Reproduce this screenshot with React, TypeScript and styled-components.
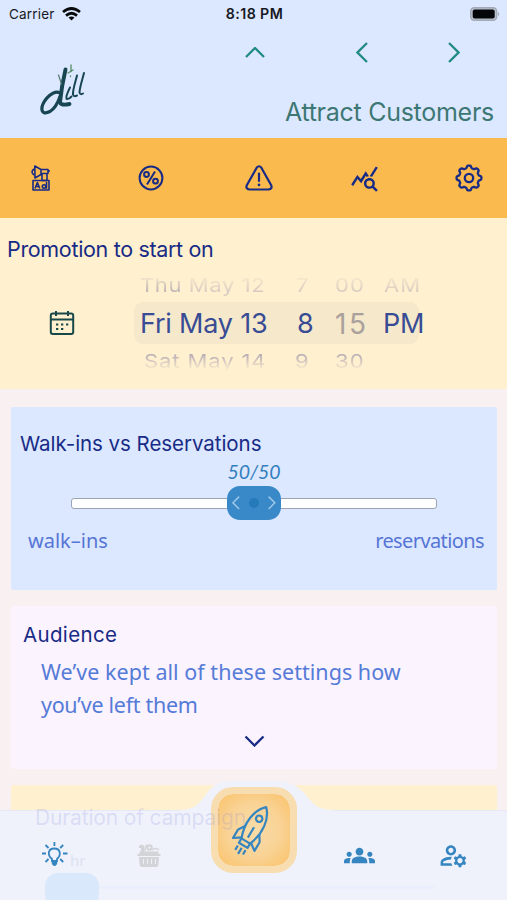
import React from 'react';
import styled, { createGlobalStyle } from 'styled-components';
import { MdGroups, MdOutlineManageAccounts, MdQueryStats } from 'react-icons/md';

const GlobalStyle = createGlobalStyle`
  * { box-sizing: border-box; }
  html, body { margin: 0; height: 900px; overflow: hidden; background: #f9f1f1; }
`;

const navy = '#172b86';
const blue = '#3585c0';

const Screen = styled.main`
  position: relative;
  width: 507px;
  height: 900px;
  overflow: hidden;
  background: #f9f1f1;
  font-family: Inter, sans-serif;
`;

const Header = styled.header`
  height: 138px;
  background: #dce8ff;
`;

const StatusBar = styled.div`
  display: grid;
  grid-template-columns: 1fr auto 1fr;
  align-items: center;
  height: 28px;
  padding: 0 7px 0 9px;
  font-size: 13.5px;
  line-height: 28px;
  color: #17191f;
`;

const Carrier = styled.div`
  display: flex;
  align-items: center;
  gap: 7px;
  letter-spacing: 0.2px;
`;

const Clock = styled.div`
  font-size: 14.2px;
  font-weight: 600;
  letter-spacing: 0.4px;
  white-space: nowrap;
`;

const BatterySlot = styled.div`
  display: flex;
  justify-content: flex-end;
`;

const HeaderBody = styled.div`
  display: grid;
  grid-template-columns: 208px 1fr;
  height: 110px;
`;

const LogoSlot = styled.div`
  padding: 33px 0 0 36px;
`;

const HeaderRight = styled.div`
  display: flex;
  flex-direction: column;
`;

const Arrows = styled.div`
  display: grid;
  grid-template-columns: 94px 120px 64px;
  justify-items: center;
  height: 48px;
  padding-top: 12px;
`;

const Title = styled.h1`
  margin: 19px 13px 0 0;
  font-size: 25px;
  line-height: 34px;
  font-weight: 400;
  letter-spacing: -0.27px;
  text-align: right;
  white-space: nowrap;
  color: #3d7774;
`;

const Toolbar = styled.nav`
  display: grid;
  grid-template-columns: 82px 138px 78px 132px 77px;
  place-items: center;
  height: 80px;
  background: #fbba4e;
  color: ${navy};
`;

const ToolButton = styled.button`
  display: grid;
  place-items: center;
  width: 30px;
  height: 30px;
  padding: 0;
  border: 0;
  background: none;
  color: inherit;
`;

const Promotion = styled.section`
  height: 171px;
  padding-top: 16px;
  background: #fff0cf;
`;

const PromotionTitle = styled.h2`
  margin: 0 0 0 7px;
  font-size: 21.5px;
  line-height: 30px;
  font-weight: 400;
  letter-spacing: -0.33px;
  color: ${navy};
`;

const PickerRow = styled.div`
  display: grid;
  grid-template-columns: 134px 292px;
  height: 118px;
`;

const CalendarSlot = styled.div`
  display: flex;
  padding: 46px 0 0 49px;
`;

const Wheel = styled.div`
  padding-top: 6px;
`;

const WheelRow = styled.div<{ $kind: 'before' | 'now' | 'after' }>`
  display: grid;
  grid-template-columns: 133px 58px 52px 45px;
  align-items: center;
  height: ${({ $kind }) => ($kind === 'now' ? 42 : 28)}px;
  margin-bottom: ${({ $kind }) => ($kind === 'after' ? 0 : $kind === 'now' ? 2 : 4)}px;
  padding-top: ${({ $kind }) => ($kind === 'now' ? 2 : 0)}px;
  width: ${({ $kind }) => ($kind === 'now' ? 285 : 292)}px;
  border-radius: 9px;
  overflow: ${({ $kind }) => ($kind === 'now' ? 'visible' : 'hidden')};
  background: ${({ $kind }) => ($kind === 'now' ? '#f5e8cb' : 'none')};
  color: ${({ $kind }) => ($kind === 'now' ? '#384b94' : $kind === 'before' ? '#d9cdc2' : '#b7adb5')};
  -webkit-mask-image: ${({ $kind }) =>
    $kind === 'now'
      ? 'none'
      : $kind === 'before'
        ? 'linear-gradient(transparent 12%, #000 75%)'
        : 'linear-gradient(#000 30%, transparent 88%)'};
`;

const WheelCell = styled.span<{ $size?: number; $pad?: number; $gray?: boolean; $spacing?: number; $flat?: boolean }>`
  display: block;
  padding-left: ${({ $pad = 0 }) => $pad}px;
  font-size: ${({ $size = 27 }) => $size}px;
  line-height: 30px;
  white-space: nowrap;
  letter-spacing: ${({ $spacing = 0 }) => $spacing}px;
  transform: ${({ $flat }) => ($flat ? 'scaleY(0.86)' : 'none')};
  ${({ $gray }) => $gray && 'color: #aaa09c;'}
`;

const WheelStrong = styled.span`
  color: #c1b7b5;
`;

const Cards = styled.div`
  display: flex;
  flex-direction: column;
  gap: 16px;
  padding: 18px 10px 0 11px;
`;

const SliderCard = styled.section`
  height: 183px;
  padding-top: 22px;
  border-radius: 2px;
  background: #dce8ff;
`;

const CardTitle = styled.h2<{ $left: number; $spacing?: number }>`
  margin: 0 0 0 ${({ $left }) => $left}px;
  font-size: 20.5px;
  line-height: 30px;
  font-weight: 400;
  letter-spacing: ${({ $spacing = 0 }) => $spacing}px;
  color: ${navy};
`;

const Ratio = styled.div`
  height: 24px;
  font-family: Lato, sans-serif;
  font-size: 19.5px;
  font-style: italic;
  line-height: 25px;
  letter-spacing: -0.1px;
  text-align: center;
  color: #337fbd;
`;

const Slider = styled.div`
  display: grid;
  place-items: center;
  height: 40px;
`;

const Track = styled.div`
  grid-area: 1 / 1;
  width: 366px;
  height: 11px;
  border: 1px solid #9da5b5;
  border-radius: 3px;
  background: #fff;
`;

const Thumb = styled.div`
  z-index: 1;
  grid-area: 1 / 1;
  display: flex;
  align-items: center;
  justify-content: space-between;
  width: 54px;
  height: 34px;
  padding: 0 5px;
  border-radius: 13px;
  background: #3989c8;
`;

const ThumbDot = styled.span`
  width: 10px;
  height: 10px;
  border-radius: 50%;
  background: #257bb9;
`;

const Ends = styled.div`
  display: flex;
  justify-content: space-between;
  padding: 4px 13px 0 17px;
  font-family: 'Noto Sans', sans-serif;
  font-size: 20px;
  line-height: 28px;
  color: #5675d5;
`;

const EndLabel = styled.span<{ $spacing: number }>`
  letter-spacing: ${({ $spacing }) => $spacing}px;
`;

const AudienceCard = styled.section`
  display: flex;
  flex-direction: column;
  height: 163px;
  padding-top: 14px;
  border-radius: 4px;
  background: #fbf3fd;
`;

const Note = styled.p`
  margin: 5px 0 0 30px;
  font-family: 'Noto Sans', sans-serif;
  font-size: 21.5px;
  line-height: 33px;
  color: #557bd8;
`;

const NoteLine = styled.span<{ $spacing: number }>`
  display: block;
  white-space: nowrap;
  letter-spacing: ${({ $spacing }) => $spacing}px;
`;

const ExpandSlot = styled.div`
  display: flex;
  justify-content: center;
  padding-top: 14px;
`;

const DurationCard = styled.section`
  height: 115px;
  border-radius: 3px;
  background: #fff0cf;
`;

const BottomBar = styled.footer`
  position: absolute;
  left: 0;
  bottom: 0;
  width: 507px;
  height: 120px;
`;

const BarShape = styled.svg`
  position: absolute;
  inset: 0;
`;

const Ghost = styled.div`
  position: absolute;
  z-index: 1;
  left: 35px;
  top: 23px;
  font-size: 21px;
  line-height: 30px;
  letter-spacing: -0.15px;
  white-space: nowrap;
  pointer-events: none;
  color: rgba(110, 110, 215, 0.17);
`;

const GhostHour = styled.span`
  position: absolute;
  left: 70px;
  top: 70px;
  font-family: 'Noto Sans', sans-serif;
  font-size: 15px;
  line-height: 20px;
  color: #dce3f2;
`;

const GhostThumb = styled.div`
  position: absolute;
  left: 45px;
  top: 93px;
  width: 54px;
  height: 34px;
  border-radius: 13px;
  background: #dae8fb;
`;

const Tabs = styled.nav`
  position: relative;
  display: grid;
  grid-template-columns: 109px 79px 132px 79px 108px;
  justify-items: center;
  height: 120px;
  padding-top: 7px;
`;

const Tab = styled.button<{ $color?: string }>`
  display: grid;
  place-items: center;
  width: 36px;
  height: 36px;
  margin-top: 50px;
  padding: 0;
  border: 0;
  background: none;
  color: ${({ $color = blue }) => $color};
`;

const Launch = styled.button`
  display: grid;
  place-items: center;
  width: 86px;
  height: 86px;
  padding: 0;
  border: 7px solid #f7ddb0;
  border-radius: 22px;
  background: radial-gradient(#f8dca8 0%, #f9d397 50%, #fac46d 95%) padding-box;
  color: ${blue};
`;

type Direction = 'up' | 'down' | 'left' | 'right';
const shapes: Record<Direction, [number, number, string]> = {
  up: [20, 11, 'M1 10 10 1l9 9'],
  down: [21, 12, 'M1.5 1.5 10.5 10.5l9-9'],
  left: [12, 21, 'M11 1 1.5 10.5 11 20'],
  right: [12, 21, 'M1 1 10.5 10.5 1 20'],
};

const ChevronSvg = styled.svg<{ $drop?: number }>`
  margin-top: ${({ $drop = 0 }) => $drop}px;
`;

function Chevron({ to, color = '#218a82', drop, scale = 1 }: { to: Direction; color?: string; drop?: number; scale?: number }) {
  const [w, h, d] = shapes[to];
  return (
    <ChevronSvg $drop={drop} width={w * scale} height={h * scale} viewBox={`0 0 ${w} ${h}`} fill="none" stroke={color} strokeWidth={2.3}>
      <path d={d} />
    </ChevronSvg>
  );
}

function Wifi() {
  return (
    <svg width="19" height="14" viewBox="0 0 19 14" fill="none" stroke="#08090b" strokeWidth="2.700">
      <path d="M1 5Q9.5-2 18 5M4 8.600q5.5-4.7 11 0" />
      <path d="m9.5 13.5-3-3q3-2.2 6 0z" fill="#08090b" stroke="none" />
    </svg>
  );
}

function Battery() {
  return (
    <svg width="31" height="14" viewBox="0 0 31 14">
      <rect x="1.700" y="0.7" width="26" height="12.6" rx="3.5" fill="#b9c0cd" stroke="#a2a9b7" strokeWidth="1.4" />
      <rect x="3.700" y="2.6" width="22" height="8.8" rx="2" fill="#050609" />
      <path d="M29 4.7q2.4 2.3 0 4.6z" fill="#a2a9b7" />
    </svg>
  );
}

function Logo() {
  return (
    <svg width="54" height="58" viewBox="36 61 54 58" fill="none" strokeLinecap="round" strokeLinejoin="round" stroke="#174650">
      <path d="M65.500 69.500C63.500 78 61 92 60 102q.5 4 9.500 2" strokeWidth="3.900" />
      <path d="M60 93C54 89 44 99 42 107c-1 6 3 7 8 4.500 5-3 8-9 10-15" strokeWidth="3.200" />
      <path d="M70 87.500c-2 4-4.500 9-3.500 11.300q2 .9 5-2.300" strokeWidth="2" />
      <path d="M77 75.500c-1.500 6-4.500 15-4 19 .5 2 2 2 4 1" strokeWidth="2" />
      <path d="M84 73c-1.500 6-4.500 15-4.500 19.500.5 2 2 2 3.500 1" strokeWidth="2" />
      <path d="m58.500 75 3 9" strokeWidth="1.200" stroke="#53786f" />
      <path d="M71 65v6.500m-3 1.500 5-3M70.500 76v.5" strokeWidth="1.300" stroke="#538b62" />
    </svg>
  );
}

function AdIcon() {
  return (
    <svg width="20" height="26" viewBox="31 165.500 20 26" fill="none" stroke="currentColor" strokeWidth="1.600" strokeLinejoin="round">
      <path d="M34.800 166.500 41 170v5l-6 3.500zM34 169.500q-4 3 0 6M41 170h7v4h-7M48 171.500h2M42 174v7h5v-7" />
      <path d="M33 181h16v9.500H33z" />
      <path d="m35 189 2.400-6 2.400 6m-4-2h3" />
      <path d="M46.500 182.500v6.700" />
      <circle cx="44" cy="187" r="1.700" />
    </svg>
  );
}

function PercentIcon() {
  return (
    <svg width="26" height="26" viewBox="0 0 26 26" fill="none" stroke="currentColor" strokeWidth="2">
      <circle cx="13" cy="13" r="11.400" />
      <path d="m17 6.500-8 13" />
      <circle cx="8.500" cy="9.500" r="2.400" />
      <circle cx="17.500" cy="16.200" r="2.400" />
    </svg>
  );
}

function WarningIcon() {
  return (
    <svg width="28" height="26" viewBox="0 0 28 26" fill="none" stroke="currentColor" strokeWidth="2.200" strokeLinecap="round" strokeLinejoin="round">
      <path d="M11.800 2.500q2.200-2.500 4.400 0l10 17.700q1.400 3.800-2.700 4.300h-19Q.4 24 1.800 20.200z" />
      <path d="M14 8.500v7.500" />
      <path d="M14 19.800v.1" strokeWidth="2.600" />
    </svg>
  );
}

function GearIcon() {
  const points = Array.from({ length: 96 }, (_, i) => {
    const a = (i / 96) * Math.PI * 2;
    const r = 11.200 + 1.250 * Math.tanh(2.200 * Math.cos(8 * a));
    return `${(14 + r * Math.sin(a)).toFixed(2)} ${(14 - r * Math.cos(a)).toFixed(2)}`;
  });
  return (
    <svg width="28" height="28" viewBox="0 0 28 28" fill="none" stroke="currentColor" strokeWidth="2.300" strokeLinejoin="round">
      <path d={`M${points.join('L')}Z`} />
      <circle cx="14" cy="14" r="4.200" />
    </svg>
  );
}

function CalendarIcon() {
  return (
    <svg width="26" height="26" viewBox="0 0 26 26" fill="none" stroke="#18484a" strokeWidth="2">
      <rect x="1.800" y="3.500" width="22.400" height="20.500" rx="2" />
      <path d="M2 9.500h22M7 1v5m12-5v5" />
      <path d="M7 14.500h2.300m2.700 0h2.300m2.700 0h2.300M7 19h2.300m2.700 0h2.300" strokeWidth="2.200" />
    </svg>
  );
}

function BulbIcon() {
  return (
    <svg width="26" height="26" viewBox="42.500 843 26 26" fill="none" stroke="currentColor" strokeWidth="1.800">
      <path d="M52.500 862v-2c-5-4-4-10.500 2.300-10.500S62 856 57.500 860v2z" />
      <path d="M52.300 861h5.400v4l-2 2h-1.400l-2-2z" fill="currentColor" stroke="none" />
      <path d="M54.900 843v4M46 846l3 3m14.700-3-3 3M42.500 854.500h4m17 0h4.500M46 863l3-3m14.700 3-3-3" />
    </svg>
  );
}

function BasketIcon() {
  return (
    <svg width="24" height="24" viewBox="0 0 24 24" fill="currentColor">
      <path d="M2 14h20l-.7 8q-.3 2-2 2H4.700q-1.700 0-2-2zM.5 11h23v2H.5z" />
      <path d="M2.500 8.500h19V11h-19zM2 3q2.500-3 5 0v7H4V5H2z" />
      <path d="M8 8q0-5 2-6M15 7q4-3 7 0" stroke="currentColor" strokeWidth="1.500" fill="none" />
      <circle cx="12.500" cy="4.500" r="3.200" />
      <circle cx="12.500" cy="4.500" r="1.200" fill="#eeeff5" />
      <path d="M6.500 16v5m4-5v5m4-5v5m4-5v5" stroke="#eeeff5" />
    </svg>
  );
}

function RocketIcon() {
  return (
    <svg width="44" height="54" viewBox="233 803 44 54" fill="none" stroke="currentColor" strokeWidth="2.2" strokeLinejoin="round">
      <g transform="translate(254 829) rotate(31)">
        <path d="M-5 14C-11-1-9-17 0-25.500 9-17 11-1 5 14z" />
        <circle cx="0" cy="-12" r="3.200" />
        <path d="M0-2v12M-8 1-12.500 8v10l7-5M8 1 12.500 8v10l-7-5M-5 14v5H5v-5" />
        <path d="M-4.500 22v5M0 22v7M4.500 22v5" />
      </g>
    </svg>
  );
}

export default function App() {
  return (
    <Screen>
      <GlobalStyle />
      <Header>
        <StatusBar>
          <Carrier>Carrier <Wifi /></Carrier>
          <Clock>8:18 PM</Clock>
          <BatterySlot><Battery /></BatterySlot>
        </StatusBar>
        <HeaderBody>
          <LogoSlot><Logo /></LogoSlot>
          <HeaderRight>
            <Arrows>
              <Chevron to="up" drop={7} />
              <Chevron to="left" drop={2} />
              <Chevron to="right" drop={2} />
            </Arrows>
            <Title>Attract Customers</Title>
          </HeaderRight>
        </HeaderBody>
      </Header>
      <Toolbar>
        <ToolButton aria-label="Ads"><AdIcon /></ToolButton>
        <ToolButton aria-label="Discounts"><PercentIcon /></ToolButton>
        <ToolButton aria-label="Alerts"><WarningIcon /></ToolButton>
        <ToolButton aria-label="Statistics"><MdQueryStats size={29} /></ToolButton>
        <ToolButton aria-label="Settings"><GearIcon /></ToolButton>
      </Toolbar>
      <Promotion>
        <PromotionTitle>Promotion to start on</PromotionTitle>
        <PickerRow>
          <CalendarSlot><CalendarIcon /></CalendarSlot>
          <Wheel>
            <WheelRow $kind="before">
              <WheelCell $size={22} $pad={6} $spacing={0.6} $flat><WheelStrong>Thu</WheelStrong> May 12</WheelCell>
              <WheelCell $size={22} $pad={29} $flat>7</WheelCell>
              <WheelCell $size={22} $pad={10} $spacing={1.2} $flat>00</WheelCell>
              <WheelCell $size={22} $pad={7} $spacing={1} $flat>AM</WheelCell>
            </WheelRow>
            <WheelRow $kind="now">
              <WheelCell $pad={6} $spacing={-0.2}>Fri May 13</WheelCell>
              <WheelCell $pad={30}>8</WheelCell>
              <WheelCell $size={28} $pad={10} $spacing={2.5} $gray>15</WheelCell>
              <WheelCell $pad={6} $spacing={-0.3}>PM</WheelCell>
            </WheelRow>
            <WheelRow $kind="after">
              <WheelCell $size={22} $pad={10} $spacing={0.9} $flat>Sat May 14</WheelCell>
              <WheelCell $size={22} $pad={28} $flat>9</WheelCell>
              <WheelCell $size={22} $pad={10} $spacing={1.2} $flat>30</WheelCell>
            </WheelRow>
          </Wheel>
        </PickerRow>
      </Promotion>
      <Cards>
        <SliderCard>
          <CardTitle $left={9} $spacing={-0.05}>Walk-ins vs Reservations</CardTitle>
          <Ratio>50/50</Ratio>
          <Slider>
            <Track />
            <Thumb>
              <Chevron to="left" color="#9cc7e9" scale={0.65} />
              <ThumbDot />
              <Chevron to="right" color="#9cc7e9" scale={0.65} />
            </Thumb>
          </Slider>
          <Ends>
            <EndLabel $spacing={0}>walk–ins</EndLabel>
            <EndLabel $spacing={-0.6}>reservations</EndLabel>
          </Ends>
        </SliderCard>
        <AudienceCard>
          <CardTitle $left={12} $spacing={0.35}>Audience</CardTitle>
          <Note>
            <NoteLine $spacing={0.03}>We’ve kept all of these settings how</NoteLine>
            <NoteLine $spacing={-0.3}>you’ve left them</NoteLine>
          </Note>
          <ExpandSlot><Chevron to="down" color={navy} /></ExpandSlot>
        </AudienceCard>
        <DurationCard />
      </Cards>
      <BottomBar>
        <BarShape width="507" height="120" viewBox="0 780 507 120">
          <path d="M0 810H180C199 810 202 798 211 788Q219 781 232 781H276Q290 781 299 788C311 798 312 810 333 810H507V900H0Z" fill="#eff1fb" />
          <path d="M0 810.500H180M333 810.500H507" stroke="#e6e9f5" />
          <path d="M99 887.500H435" stroke="#e9effc" strokeWidth="3" />
        </BarShape>
        <Ghost>Duration of campaign</Ghost>
        <GhostHour>hr</GhostHour>
        <GhostThumb />
        <Tabs>
          <Tab aria-label="Ideas"><BulbIcon /></Tab>
          <Tab aria-label="Basket" $color="#d2d4d7"><BasketIcon /></Tab>
          <Launch aria-label="Launch"><RocketIcon /></Launch>
          <Tab aria-label="Groups"><MdGroups size={31} /></Tab>
          <Tab aria-label="Account settings"><MdOutlineManageAccounts size={31} /></Tab>
        </Tabs>
      </BottomBar>
    </Screen>
  );
}
